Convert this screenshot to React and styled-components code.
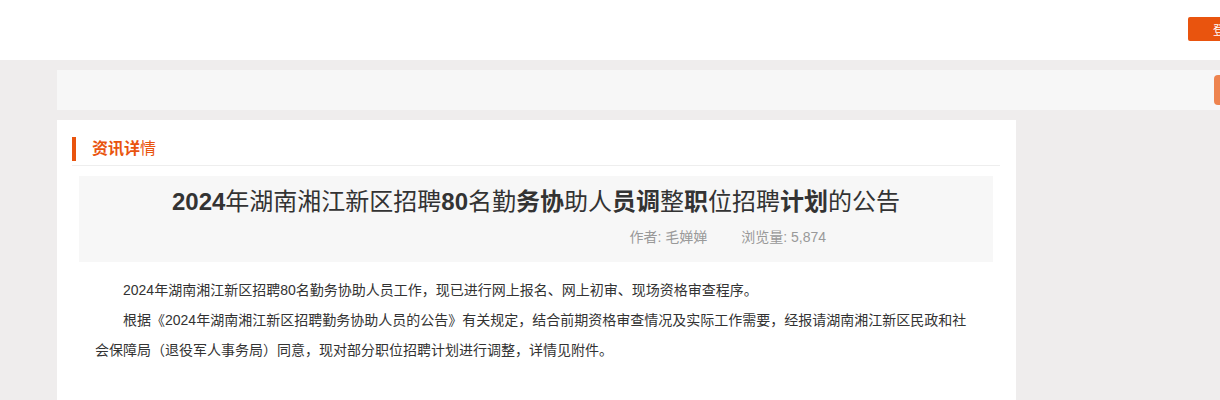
import React from "react";
import styled, { createGlobalStyle } from "styled-components";

const GlobalStyle = createGlobalStyle`
  html, body {
    margin: 0;
    padding: 0;
    overflow: hidden;
    background: #efeded;
    font-family: "Liberation Sans", "Noto Sans CJK SC", sans-serif;
    color: #333;
  }
`;

const Header = styled.header`
  height: 60px;
  background: #fff;
`;

const HeaderInner = styled.div`
  width: 1200px;
  margin-left: 57px;
  height: 100%;
  display: flex;
  align-items: center;
  justify-content: flex-end;
  padding-right: 9px;
  box-sizing: border-box;
`;

const LoginButton = styled.button`
  width: 60px;
  height: 24px;
  margin-top: -2px;
  border: none;
  border-radius: 2px;
  background: #e9540e;
  color: #fff;
  font-family: inherit;
  font-size: 12px;
  padding: 0 0 0 25px;
  text-align: left;
  white-space: nowrap;
  overflow: hidden;
`;

const Container = styled.div`
  width: 1200px;
  margin-left: 57px;
`;

const NavBar = styled.div`
  margin-top: 10px;
  height: 40px;
  background: #f7f7f7;
  display: flex;
  align-items: center;
  justify-content: flex-end;
  padding-right: 5px;
`;

const NavAction = styled.div`
  width: 38px;
  height: 30px;
  border-radius: 4px;
  background: #ee844f;
`;

const Main = styled.div`
  display: flex;
  margin-top: 10px;
`;

const Card = styled.section`
  width: 959px;
  min-height: 320px;
  background: #fff;
`;

const CardHead = styled.div`
  margin: 0 16px 0 15px;
  padding: 17px 0 4px;
  border-bottom: 1px solid #eee;
  display: flex;
  align-items: center;
  gap: 16px;
`;

const HeadBar = styled.span`
  width: 4px;
  height: 24px;
  background: #e9540e;
`;

const HeadTitle = styled.h2`
  margin: 0;
  font-size: 16px;
  line-height: 24px;
  color: #e9540e;
  font-weight: 400;
`;

const B = styled.span`
  font-weight: 700;
`;

const R = styled.span`
  font-weight: 400;
`;

const InfoBox = styled.div`
  margin: 10px 23px 0 22px;
  background: #f7f7f7;
  padding: 12px 0 15px;
`;

const ArticleTitle = styled.h1`
  margin: 0;
  text-align: center;
  font-size: 24px;
  line-height: 28px;
  color: #333;
  font-weight: 400;
`;

const Meta = styled.div`
  margin-top: 11px;
  display: flex;
  justify-content: flex-end;
  gap: 34px;
  padding-right: 167px;
  font-size: 14px;
  line-height: 20px;
  color: #999;
`;

const Article = styled.div`
  padding: 13px 39px 0 38px;
`;

const Para = styled.p`
  margin: 0;
  font-size: 14px;
  line-height: 30px;
  text-indent: 2em;
  color: #333;
`;

export default function App() {
  return (
    <>
      <GlobalStyle />
      <Header>
        <HeaderInner>
          <LoginButton>登录</LoginButton>
        </HeaderInner>
      </Header>
      <Container>
        <NavBar>
          <NavAction />
        </NavBar>
        <Main>
          <Card>
            <CardHead>
              <HeadBar />
              <HeadTitle>
                <B>资讯详</B>
                <R>情</R>
              </HeadTitle>
            </CardHead>
            <InfoBox>
              <ArticleTitle>
                <B>2024</B>
                <R>年湖南湘江新区招聘</R>
                <B>80</B>
                <R>名勤</R>
                <B>务协</B>
                <R>助人</R>
                <B>员调</B>
                <R>整</R>
                <B>职</B>
                <R>位招聘</R>
                <B>计划</B>
                <R>的公告</R>
              </ArticleTitle>
              <Meta>
                <span>作者: 毛婵婵</span>
                <span>浏览量: 5,874</span>
              </Meta>
            </InfoBox>
            <Article>
              <Para>
                2024年湖南湘江新区招聘80名勤务协助人员工作，现已进行网上报名、网上初审、现场资格审查程序。
              </Para>
              <Para>
                根据《2024年湖南湘江新区招聘勤务协助人员的公告》有关规定，结合前期资格审查情况及实际工作需要，经报请湖南湘江新区民政和社会保障局（退役军人事务局）同意，现对部分职位招聘计划进行调整，详情见附件。
              </Para>
            </Article>
          </Card>
        </Main>
      </Container>
    </>
  );
}
